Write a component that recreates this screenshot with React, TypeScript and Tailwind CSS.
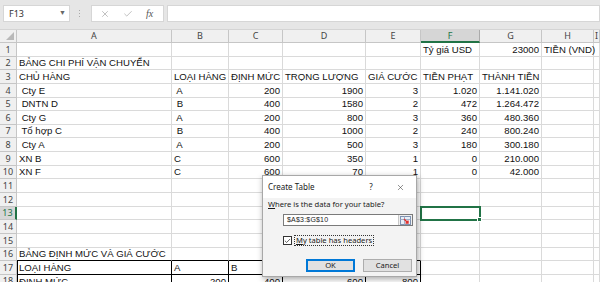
import { X, Check } from 'lucide-react';

const COLS = ['A', 'B', 'C', 'D', 'E', 'F', 'G', 'H', 'I'];

const DATA: Record<number, string[]> = {
  1: ['', '', '', '', '', 'Tỷ giá USD', '23000', 'TIỀN (VND)'],
  2: ['BẢNG CHI PHÍ VẬN CHUYỂN'],
  3: ['CHỦ HÀNG', 'LOẠI HÀNG', 'ĐỊNH MỨC', 'TRỌNG LƯỢNG', 'GIÁ CƯỚC', 'TIỀN PHẠT', 'THÀNH TIỀN'],
  4: [' Cty E', ' A', '200', '1900', '3', '1.020', '1.141.020'],
  5: [' DNTN D', ' B', '400', '1580', '2', '472', '1.264.472'],
  6: [' Cty G', ' A', '200', '800', '3', '360', '480.360'],
  7: [' Tổ hợp C', ' B', '400', '1000', '2', '240', '800.240'],
  8: [' Cty A', ' A', '200', '500', '3', '180', '300.180'],
  9: ['XN B', 'C', '600', '350', '1', '0', '210.000'],
  10: ['XN F', 'C', '600', '70', '1', '0', '42.000'],
  16: ['BẢNG ĐỊNH MỨC VÀ GIÁ CƯỚC'],
  17: ['LOẠI HÀNG', 'A', 'B', 'C', 'D'],
  18: ['ĐỊNH MỨC', '200', '400', '600', '800'],
};

const ROWS = Array.from({ length: 18 }, (_, i) => i + 1);

function isNumber(v: string) {
  return /^[\d.]+$/.test(v);
}

function Toolbar() {
  return (
    <div className="h-[30px] bg-[#e6e6e6] flex items-start pt-[5px] border-b border-[#d4d4d4]">
      <div className="ml-[3px] w-[67px] h-[17px] bg-white border border-[#d6d6d6] flex items-center justify-between pl-[5px] pr-[3px] text-[9px] text-[#333] font-['Noto_Sans',sans-serif]">
        <span>F13</span>
        <span className="text-[7px] text-[#666]">▼</span>
      </div>
      <div className="ml-[9px] h-[17px] flex flex-col justify-center gap-[2px]">
        <span className="w-[1px] h-[1px] bg-[#aaa]" />
        <span className="w-[1px] h-[1px] bg-[#aaa]" />
        <span className="w-[1px] h-[1px] bg-[#aaa]" />
      </div>
      <div className="ml-[11px] w-[73px] h-[17px] bg-white border border-[#d6d6d6] flex items-center pl-[8px] gap-[13px]">
        <X className="w-[10px] h-[10px] text-[#b4b4b4]" strokeWidth={2} />
        <Check className="w-[10px] h-[10px] text-[#b4b4b4]" strokeWidth={2} />
        <span className="text-[10px] italic text-[#555] font-['Liberation_Serif',serif]">fx</span>
      </div>
      <div className="ml-[3px] flex-1 h-[17px] bg-white border border-[#d6d6d6]" />
    </div>
  );
}

function Cell({ row, col }: { row: number; col: number }) {
  const v = DATA[row]?.[col] ?? '';
  const table2 = (row === 17 || row === 18) && col <= 4;
  const above2 = row === 16 && col <= 4;
  const selected = row === 13 && col === 5;
  return (
    <div
      className={
        'relative flex items-end pb-[1px] px-[2px] text-[9.6px] leading-[11px] text-[#111] whitespace-pre border-r border-b ' +
        (table2 ? 'border-black ' : above2 ? 'border-r-[#dadada] border-b-black ' : 'border-[#dadada] ') +
        (table2 && col === 0 ? 'shadow-[inset_1px_0_0_#000] ' : '') +
        (isNumber(v) ? 'justify-end ' : '') +
        (selected ? 'z-10 outline-2 outline-[#217346] -outline-offset-1 ' : '')
      }
    >
      <span className="overflow-visible">{v}</span>
      {selected && (
        <span className="absolute -right-[3px] -bottom-[3px] w-[5px] h-[5px] bg-[#217346] border border-white" />
      )}
    </div>
  );
}

function Sheet() {
  return (
    <div className="grid grid-cols-[17px_155px_57px_54px_83px_55px_59px_62px_52px_1fr] grid-rows-[13px] auto-rows-[13.65px] font-['Liberation_Sans',Arial,sans-serif]">
      <div className="relative bg-[#f0f0f0] border-r border-b border-[#c6c6c6]">
        <svg className="absolute right-[2px] bottom-[2px]" width="8" height="8" viewBox="0 0 8 8">
          <polygon points="8,0 8,8 0,8" fill="#b9b9b9" />
        </svg>
      </div>
      {COLS.map((c) => (
        <div
          key={c}
          className={
            'flex items-center justify-center text-[9px] font-[\'Noto_Sans\',sans-serif] border-r ' +
            (c === 'F'
              ? 'bg-[#d6d6d6] text-[#217346] border-r-[#ababab] border-b-2 border-b-[#217346]'
              : 'bg-[#f0f0f0] text-[#444] border-[#c6c6c6] border-b')
          }
        >
          {c}
        </div>
      ))}
      {ROWS.map((r) => (
        <div key={r} className="contents">
          <div
            className={
              'flex items-center justify-center text-[9px] font-[\'Noto_Sans\',sans-serif] border-b border-[#c6c6c6] ' +
              (r === 13
                ? 'bg-[#d6d6d6] text-[#217346] border-r-2 border-r-[#217346]'
                : 'bg-[#f0f0f0] text-[#444] border-r')
            }
          >
            {r}
          </div>
          {COLS.map((_, ci) => (
            <Cell key={ci} row={r} col={ci} />
          ))}
        </div>
      ))}
    </div>
  );
}

function RefIcon() {
  return (
    <svg width="11" height="9" viewBox="0 0 11 9">
      <rect x="0.5" y="0.5" width="10" height="8" fill="#e8eef7" stroke="#7f93b2" />
      <line x1="0.5" y1="3.5" x2="10.5" y2="3.5" stroke="#9fb0c9" />
      <line x1="4.5" y1="0.5" x2="4.5" y2="8.5" stroke="#9fb0c9" />
      <path d="M4 3 L8 7 M8 4.5 L8 7 L5.5 7" stroke="#e0302c" strokeWidth="1.4" fill="none" />
    </svg>
  );
}

function CreateTableDialog() {
  return (
    <div className="absolute left-[262px] top-[175px] w-[155px] h-[102px] z-20 bg-[#f3f3f3] border border-[#a8a8a8] shadow-[1px_2px_6px_rgba(0,0,0,0.35)] font-['Noto_Sans',sans-serif] text-[7.6px] text-[#1a1a1a]">
      <div className="h-[22px] flex items-center pl-[5px] bg-white">
        <span className="flex-1 text-[8px]">Create Table</span>
        <span className="w-[10px] text-center text-[8px] mr-[20px]">?</span>
        <X className="w-[9px] h-[9px] mr-[11px] text-[#333]" strokeWidth={1.4} />
      </div>
      <div className="pl-[5px] pr-[3px] pt-[1px]">
        <div className="leading-[10px]">
          <span className="underline">W</span>here is the data for your table?
        </div>
        <div className="mt-[5px] ml-[15px] h-[12px] flex bg-white border border-[#7a7a7a]">
          <span className="flex-1 pl-[3px] leading-[10px] text-[7px] font-['Liberation_Sans',sans-serif] tracking-[0.2px]">$A$3:$G$10</span>
          <span className="w-[14px] flex items-center justify-center border-l border-[#c8c8c8] bg-[#f0f0f0]">
            <RefIcon />
          </span>
        </div>
        <div className="mt-[9px] ml-[15px] flex items-center gap-[2px]">
          <span className="w-[9px] h-[9px] bg-white border border-[#333] flex items-center justify-center">
            <Check className="w-[8px] h-[8px] text-[#222]" strokeWidth={2.5} />
          </span>
          <span className="px-[1px] leading-[9px] border border-dotted border-[#333]">
            <span className="underline">M</span>y table has headers
          </span>
        </div>
        <div className="mt-[13px] ml-[38px] flex gap-[8px]">
          <div className="w-[49px] h-[13px] flex items-center justify-center bg-[#e1e1e1] border-2 border-[#0078d7]">
            OK
          </div>
          <div className="w-[49px] h-[13px] flex items-center justify-center bg-[#e1e1e1] border border-[#adadad]">
            Cancel
          </div>
        </div>
      </div>
    </div>
  );
}

export default function App() {
  return (
    <div className="relative w-[600px] h-[282px] overflow-hidden bg-white">
      <Toolbar />
      <Sheet />
      <CreateTableDialog />
    </div>
  );
}
